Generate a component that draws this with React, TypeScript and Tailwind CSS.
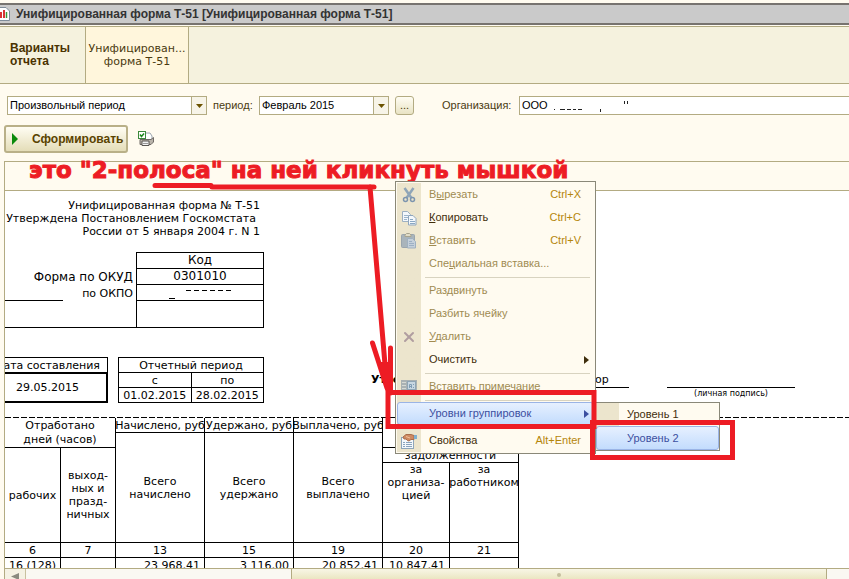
import React from 'react';
import { X } from 'lucide-react';

type MenuEntry = {
  before?: string;
  key?: string;
  after?: string;
  shortcut?: string;
  icon?: React.ReactNode;
  enabled?: boolean;
  active?: boolean;
  arrow?: boolean;
  separator?: boolean;
};

const CutIcon = () => (
  <svg width="14" height="16" viewBox="0 0 14 16" fill="none">
    <path d="M2.500 1L9.500 11M11.500 1L4.500 11" stroke="#8fa5b8" strokeWidth="2.500" />
    <circle cx="3.500" cy="12.500" r="2" stroke="#7d95ae" strokeWidth="1.500" />
    <circle cx="10.500" cy="12.500" r="2" stroke="#7d95ae" strokeWidth="1.500" />
  </svg>
);

const PagesIcon = () => (
  <svg width="16" height="16" viewBox="0 0 16 16">
    <path d="M1.5 1.5h5l3 3v7h-8z" fill="#f4f8fc" stroke="#9db0c2" />
    <path d="M3 5.500h4M3 7.500h4M3 9.500h3" stroke="#9db5cc" />
    <path d="M7.500 5.500h4.500l3 3v6.500h-7.500z" fill="#f4f8fc" stroke="#8fa6bd" />
    <path d="M9 9.500h3M9 11.500h5M9 13.500h5" stroke="#8ba8c4" />
  </svg>
);

const PasteIcon = () => (
  <svg width="16" height="16" viewBox="0 0 16 16">
    <rect x="0.500" y="1.500" width="13" height="13" rx="1" fill="#a9b4bb" stroke="#9aa5ad" />
    <path d="M4 3.500V2l1.500-1.500h3L10 2v1.500z" fill="#e0dcc8" stroke="#a8a48f" />
    <path d="M6.500 5.500h5l3 3v6.500h-8z" fill="#c5d0da" stroke="#9fb0c0" />
    <path d="M8 8.500h3M8 10.500h5M8 12.500h5" stroke="#9db0c4" />
  </svg>
);

const NoteIcon = () => (
  <svg width="16" height="14" viewBox="0 0 16 14">
    <rect width="16" height="14" fill="#a9b1b3" />
    <path d="M1 2.500h4M1 5.500h4M1 8.500h4M1 11.500h4" stroke="#d6d9d4" />
    <rect x="6.500" y="1.500" width="8" height="8" fill="#c8d7e2" stroke="#8fa5b5" />
    <path d="M8.500 8V4.500h2V8M8.500 6.500h2M12.500 4v1M12.500 7v1" fill="none" stroke="#7f9cb5" />
  </svg>
);

const PropertiesIcon = () => (
  <svg width="16" height="16" viewBox="0 0 16 16">
    <rect x="0.500" y="4.500" width="12" height="11" fill="#f4f8fb" stroke="#8ea5ba" />
    <path d="M2 9.500h2M5 9.500h6M2 11.500h2M5 11.500h6M2 13.500h2M5 13.500h6" stroke="#8aa4bd" />
    <path d="M2 4l3-2.500h5l3 1v4h-3L8 8 6.500 7.500 5 6 3 6z" fill="#cf8a62" stroke="#a86d4c" />
    <path d="M5 3.500l4 1.500" stroke="#f0c09c" />
    <rect x="13" y="2" width="3" height="4" fill="#7fb0cf" />
  </svg>
);

const PrintIcon = () => (
  <svg width="16" height="16" viewBox="0 0 16 16">
    <path d="M7 2h5l2 3v4H7z" fill="#fff" stroke="#9aa4ad" />
    <path d="M2 8.500h11l2.500-2V11L13 13.500H2z" fill="#b9b3aa" stroke="#6f6a66" />
    <path d="M4 10h7v4.500H4z" fill="#f3f3f3" stroke="#5a5652" />
    <path d="M5 12.500h5" stroke="#999" />
    <rect x="0.500" y="0.500" width="7" height="7" fill="#fff" stroke="#3d8a3d" />
    <path d="M2 3.500l1.500 2L6 2.500" fill="none" stroke="#1f8a1f" strokeWidth="1.500" />
  </svg>
);

const ReportIcon = () => (
  <svg width="10" height="14" viewBox="0 0 10 14">
    <path d="M-3 0.500h9l3.500 3.500v9.500h-13z" fill="#fff" stroke="#7f8c99" />
    <path d="M1 5v6" stroke="#d83434" strokeWidth="2" />
    <path d="M4 3v8" stroke="#d83434" strokeWidth="2" />
    <path d="M6.500 5v6" stroke="#3a9a3a" strokeWidth="1.500" />
  </svg>
);

const menuItems: MenuEntry[] = [
  { before: 'В', key: 'ы', after: 'резать', shortcut: 'Ctrl+X', icon: <CutIcon /> },
  { key: 'К', after: 'опировать', shortcut: 'Ctrl+C', icon: <PagesIcon />, enabled: true },
  { key: 'В', after: 'ставить', shortcut: 'Ctrl+V', icon: <PasteIcon /> },
  { before: 'Спе', key: 'ц', after: 'иальная вставка...' },
  { separator: true },
  { before: 'Раздвинуть' },
  { before: 'Разбить ячейку' },
  { key: 'У', after: 'далить', icon: <X size={16} color="#b09da0" strokeWidth={3} /> },
  { before: 'Очистить', enabled: true, arrow: true },
  { separator: true },
  { before: 'Вставить примечание', icon: <NoteIcon /> },
  { separator: true },
  { before: 'Уровни группировок', active: true, arrow: true },
  { separator: true },
  { before: 'Свойства', shortcut: 'Alt+Enter', icon: <PropertiesIcon />, enabled: true },
];

const ContextMenu = () => (
  <div role="menu" className="absolute left-[395px] top-[181px] w-[201px] border border-[#8a8878] bg-[#fffbf0] p-px">
    <div className="bg-linear-to-r from-[#ece5cd] from-[24px] to-[#fffbf0] to-[24px]">
      {menuItems.map((item, i) =>
        item.separator ? (
          <div key={i} className="flex h-1 items-center pl-7 pr-1">
            <div className="h-px w-full bg-[#d8d3c0]" />
          </div>
        ) : (
          <button
            key={i}
            role="menuitem"
            className={
              item.active
                ? 'flex h-[23px] w-full items-center rounded-[3px] border border-[#9ab4e6] bg-linear-to-b from-[#e6f0ff] to-[#c3dcfd] text-[#3c4fa0]'
                : item.enabled
                  ? 'flex h-[23px] w-full items-center border border-transparent text-[#3f2e0c]'
                  : 'flex h-[23px] w-full items-center border border-transparent text-[#a08b52]'
            }
          >
            <span className="flex w-[22px] shrink-0 justify-center">{item.icon}</span>
            <span className="ml-[9px] whitespace-nowrap">
              {item.before}
              <span className="underline">{item.key}</span>
              {item.after}
            </span>
            {item.shortcut && <span className="ml-auto mr-3 text-[#b5860b]">{item.shortcut}</span>}
            {item.arrow && (
              <svg width="5" height="8" viewBox="0 0 5 8" className="ml-auto mr-1 shrink-0 fill-current">
                <path d="M0 0l5 4-5 4z" />
              </svg>
            )}
          </button>
        ),
      )}
    </div>
  </div>
);

const SubMenu = () => (
  <div role="menu" className="absolute left-[595px] top-[402px] w-[125px] border border-[#8a8878] bg-[#fffbf0]">
    <div className="bg-linear-to-r from-[#ece5cd] from-[23px] to-[#fffbf0] to-[23px]">
      <button role="menuitem" className="flex h-[23px] w-full items-center pl-[31px] text-[#3f2e0c]">
        Уровень 1
      </button>
      <button
        role="menuitem"
        className="flex h-6 w-full items-center rounded-[3px] border border-[#9ab4e6] bg-linear-to-b from-[#e6f0ff] to-[#c3dcfd] pl-[30px] text-[#3c4fa0]"
      >
        Уровень 2
      </button>
    </div>
  </div>
);

// Hand-drawn red marks over the window
const Marks = () => (
  <svg width="849" height="579" className="pointer-events-none absolute left-0 top-0" fill="none" stroke="#ed1c24">
    <path d="M155 185.500H211M212 187H374" strokeWidth="5" strokeLinecap="round" />
    <path d="M370 187L387 388M372.500 343L387 388M390.500 348V393" strokeWidth="5" strokeLinecap="round" />
    <path d="M379 362L388 400L392 362z" fill="#ed1c24" stroke="none" />
    <rect x="388" y="392.500" width="206" height="34" strokeWidth="5" />
    <rect x="592.500" y="422.500" width="140" height="35" strokeWidth="5" />
  </svg>
);

const Caret = () => (
  <svg width="7" height="4" viewBox="0 0 7 4">
    <path d="M0 0h7L3.500 4z" fill="#6b5200" />
  </svg>
);

const Combo = ({ id, value, width, label }: { id: string; value: string; width: string; label: string }) => (
  <div className={`flex h-[19px] border border-[#b3ab82] bg-white ${width}`}>
    <input id={id} aria-label={label} defaultValue={value} className="min-w-0 flex-1 pl-0.5 text-black outline-none" />
    <button aria-label="Выбрать" className="flex w-[15px] items-center justify-center border-l border-[#b3ab82] bg-[#f7f4e8]">
      <Caret />
    </button>
  </div>
);

const totals = [
  { title: 'Начислено, руб', text: 'начислено' },
  { title: 'Удержано, руб', text: 'удержано' },
  { title: 'Выплачено, руб', text: 'выплачено' },
];

const numbers = ['6', '7', '13', '15', '19', '20', '21'];
const values = ['16 (128)', '', '23 968,41', '3 116,00', '20 852,41', '10 847,41', ''];

const Payroll = () => (
  <table className="w-[514px] table-fixed border-separate border-spacing-0 text-center leading-[13px] [&_td]:border-b [&_td]:border-r [&_td]:border-black [&_td]:p-0 [&_th]:border-b [&_th]:border-r [&_th]:border-black [&_th]:p-0 [&_th]:font-normal">
    <colgroup>
      <col className="w-[56px]" />
      <col className="w-[55px]" />
      <col className="w-[89px]" />
      <col className="w-[89px]" />
      <col className="w-[89px]" />
      <col className="w-[67px]" />
      <col className="w-[69px]" />
    </colgroup>
    <thead>
      <tr className="h-[15px]">
        <th colSpan={2} rowSpan={2} className="leading-[14px]">
          Отработано
          <br />
          дней (часов)
        </th>
        {totals.map((t) => (
          <th key={t.title}>
            <div className="flex justify-center overflow-hidden whitespace-nowrap">{t.title}</div>
          </th>
        ))}
        <th colSpan={2} rowSpan={2} />
      </tr>
      <tr className="h-[15px]">
        {totals.map((t) => (
          <th key={t.text} rowSpan={3}>
            Всего
            <br />
            {t.text}
          </th>
        ))}
      </tr>
      <tr className="h-[15px]">
        <th rowSpan={2}>рабочих</th>
        <th rowSpan={2}>
          выход-
          <br />
          ных и
          <br />
          празд-
          <br />
          ничных
        </th>
        <th colSpan={2}>задолженности</th>
      </tr>
      <tr className="h-20">
        <th className="align-top">
          за
          <br />
          организа-
          <br />
          цией
        </th>
        <th className="align-top">
          за
          <div className="flex justify-center overflow-hidden">работником</div>
        </th>
      </tr>
      <tr className="h-[15px]">
        {numbers.map((n) => (
          <th key={n}>{n}</th>
        ))}
      </tr>
    </thead>
    <tbody>
      <tr className="h-[15px]">
        {values.map((v, i) => (
          <td key={i} className="whitespace-nowrap text-right">
            <span className="pr-1">{v}</span>
          </td>
        ))}
      </tr>
    </tbody>
  </table>
);

const Sheet = () => (
  <div className="min-h-0 flex-1 overflow-hidden bg-white font-['DejaVu_Sans',sans-serif] text-[11px] leading-[13px] text-black">
    <div className="w-[255px] whitespace-nowrap pt-2 text-right">
      <p>Унифицированная форма № Т-51</p>
      <p className="pr-1">Утверждена Постановлением Госкомстата</p>
      <p>России от 5 января 2004 г. N 1</p>
    </div>

    <div className="mt-[14px] flex w-[259px] border-b border-black text-[12px]">
      <div className="flex-1 pt-4">
        <p className="h-4 pr-[3px] text-right leading-[18px]">Форма по ОКУД</p>
        <div className="flex h-[17px]">
          <div className="w-[58px] border-b border-black" />
          <p className="flex-1 pr-[3px] text-right text-[11px] leading-[20px]">по ОКПО</p>
        </div>
      </div>
      <table className="w-[128px] border-separate border-spacing-0 border-l border-t border-black text-center [&_td]:border-b [&_td]:border-r [&_td]:border-black [&_td]:p-0">
        <tbody>
          <tr className="h-4">
            <td>Код</td>
          </tr>
          <tr className="h-4">
            <td>0301010</td>
          </tr>
          <tr className="h-4">
            <td>
              <svg width="126" height="14" className="mx-auto block" stroke="#000">
                <path d="M32 12.500h6" />
                <path d="M49 4.500h46" strokeDasharray="5 3" />
              </svg>
            </td>
          </tr>
          <tr className="h-[26px]">
            <td className="border-b-0!" />
          </tr>
        </tbody>
      </table>
    </div>

    <div className="mt-[29px] flex items-start">
      <table className="w-[103px] table-fixed border-separate border-spacing-0 text-center">
        <tbody>
          <tr className="h-[15px]">
            <td className="border-r border-t border-black p-0">
              <div className="flex justify-end overflow-hidden whitespace-nowrap pr-[7px]">Дата составления</div>
            </td>
          </tr>
          <tr className="h-[31px]">
            <td className="border-2 border-l-0 border-black p-0 pr-4">29.05.2015</td>
          </tr>
        </tbody>
      </table>
      <table className="ml-[10px] w-[146px] table-fixed border-separate border-spacing-0 border-l border-t border-black text-center [&_td]:border-b [&_td]:border-r [&_td]:border-black [&_td]:p-0">
        <tbody>
          <tr className="h-[15px]">
            <td colSpan={2}>Отчетный период</td>
          </tr>
          <tr className="h-[15px]">
            <td>с</td>
            <td>по</td>
          </tr>
          <tr className="h-[15px]">
            <td>01.02.2015</td>
            <td>28.02.2015</td>
          </tr>
        </tbody>
      </table>
      <div className="ml-[107px] flex items-start pt-4">
        <p className="w-[224px] font-bold">Утверждаю</p>
        <p className="h-[15px] w-[34px] border-b border-black">ор</p>
        <div className="ml-[38px] w-32 text-center text-[8px] leading-[12px]">
          <div className="h-[15px] border-b border-black" />
          (личная подпись)
        </div>
      </div>
    </div>

    <div className="mt-[14px] h-px bg-[repeating-linear-gradient(90deg,#000_0_6px,transparent_6px_8px)]" />
    <Payroll />
  </div>
);

const App = () => {
  return (
    <div className="relative flex h-screen flex-col overflow-hidden bg-[#fffbf0] font-['Liberation_Sans',sans-serif] text-[11px] text-[#4a3a10]">
      <header className="mt-[3px] flex h-[22px] shrink-0 items-center border-y-2 border-[#77736f] bg-[#cacaca]">
        <ReportIcon />
        <h1 className="ml-1.5 whitespace-nowrap text-[12px] font-bold text-[#333]">
          Унифицированная форма Т-51 [Унифицированная форма Т-51]
        </h1>
      </header>

      <div className="mt-px flex h-[58px] shrink-0 border-y border-[#b3ab82] bg-[#f5f2de] leading-[13px]">
        <div className="flex w-[85px] items-center pl-[10px] text-[12px] font-bold text-[#4a3200]">
          Варианты
          <br />
          отчета
        </div>
        <button className="w-[104px] border-x border-[#b3ab82] bg-[#fff6dc] font-['DejaVu_Sans',sans-serif]">
          Унифицирован...
          <br />
          форма Т-51
        </button>
      </div>

      <div className="mt-3 flex shrink-0 items-center pl-[7px]">
        <Combo id="kind" label="Вид периода" value="Произвольный период" width="w-[200px]" />
        <label htmlFor="period" className="ml-[6px] w-[46px]">
          период:
        </label>
        <Combo id="period" label="Период" value="Февраль 2015" width="w-[130px]" />
        <button className="ml-[6px] h-[19px] w-[19px] rounded-[3px] border border-[#b3ab82] bg-linear-to-b from-[#fffdf3] to-[#e9e3c4] leading-[15px]">
          ...
        </button>
        <label htmlFor="org" className="ml-7 w-[77px]">
          Организация:
        </label>
        <div className="flex h-[19px] flex-1 items-center border border-r-0 border-[#b3ab82] bg-white">
          <input id="org" defaultValue={'ООО'} className="w-[30px] pl-0.5 text-black outline-none" />
          <svg width="80" height="14" fill="none" stroke="#222">
            <path d="M4 10.500h1M10 10.500h5M17 10.500h4M23 10.500h3M28 10.500h4M50.500 10v3" />
            <path d="M74.500 2v3M77.500 2v3" />
          </svg>
        </div>
      </div>

      <div className="mt-[10px] flex shrink-0 items-center pl-1">
        <button className="flex h-7 w-[124px] items-center rounded-[3px] border-2 border-[#b9b088] bg-linear-to-b from-[#fffdf3] to-[#e4ddb8] pl-1.5 text-[12px] font-bold text-[#5a4300]">
          <svg width="6" height="12" viewBox="0 0 6 12" className="mr-[14px] shrink-0">
            <path d="M0 0l6 6-6 6z" fill="#0a8a0a" />
          </svg>
          Сформировать
        </button>
        <button aria-label="Печать" className="ml-[10px]">
          <PrintIcon />
        </button>
      </div>

      <main className="ml-1 mt-2 flex min-h-0 flex-1 flex-col border-l border-t border-[#b3ab82]">
        <div className="h-[29px] shrink-0 border-b border-[#b3ab82] pl-6">
          <p className="whitespace-nowrap font-['DejaVu_Sans',sans-serif] text-[23px] font-bold leading-[17px] text-[#ed1c24] [-webkit-text-stroke:1px_#ed1c24]">
            это "2-полоса" на ней кликнуть мышкой
          </p>
        </div>
        <Sheet />
        <div className="flex h-[11px] shrink-0 overflow-hidden border-t border-[#b3ab82] bg-[#faf8f2]">
          <div className="flex w-[21px] justify-center border-r border-[#c9c19e] bg-[#f5f2e4] pt-1">
            <svg width="8" height="7" viewBox="0 0 8 7">
              <path d="M8 0v7L0 3.500z" fill="#8a8a80" />
            </svg>
          </div>
          <div className="ml-[265px] mr-[22px] flex flex-1 justify-center border-x border-[#b3ab82] bg-linear-to-b from-[#f8f6e6] to-[#ebe6c2] pt-1">
            <span className="h-1 w-1 rounded-full bg-[#c4bf9d]" />
          </div>
        </div>
      </main>

      <ContextMenu />
      <SubMenu />
      <Marks />
    </div>
  );
};

export default App;
